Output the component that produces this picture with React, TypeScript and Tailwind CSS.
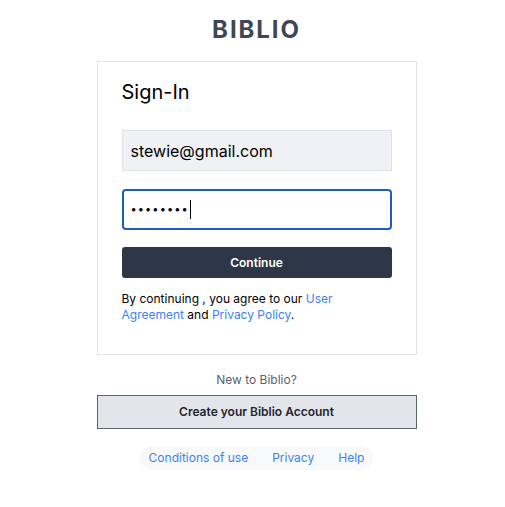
import React from "react";

export default function App() {
  return (
    <div className="min-h-screen bg-white flex flex-col items-center pt-[14px] pl-[8px]" style={{ fontFamily: "Inter, 'Noto Sans', sans-serif" }}>
      <h1 className="text-[24px] leading-[32px] font-bold tracking-[0.08em] text-[#3d4756]">BIBLIO</h1>
      <div className="mt-[15px] w-[320px] border border-[#e2e4ea] px-6 pt-[16px] pb-[31px]">
        <h2 className="text-[20px] leading-[28px] text-black">Sign-In</h2>
        <form className="mt-[24px] flex flex-col" onSubmit={(e) => e.preventDefault()}>
          <input
            defaultValue="stewie@gmail.com"
            className="h-[41px] w-full bg-[#f0f1f5] border border-[#dfe2e8] px-2 text-[16px] text-black outline-none"
          />
          <div className="mt-[18px] h-[41px] w-full border-2 border-[#1a5ec2] rounded-[4px] pl-[7px] flex items-center text-black">
            <span className="text-[11px] tracking-[1.1px]">••••••••</span>
            <span className="ml-[1px] inline-block w-[1px] h-[19px] bg-black" />
          </div>
          <button className="mt-[17px] h-[31px] w-full rounded-[3px] bg-[#2e3747] text-white text-[12px] font-semibold">
            Continue
          </button>
        </form>
        <p className="mt-[13px] text-[12px] leading-[16px] text-black">
          By continuing , you agree to our <a className="text-[#3b82f6]">User Agreement</a> and{" "}
          <a className="text-[#3b82f6]">Privacy Policy</a>.
        </p>
      </div>
      <p className="mt-[17px] text-[12px] leading-[16px] text-[#5b6270]">New to Biblio?</p>
      <button className="mt-[7px] w-[320px] h-[34px] bg-[#e2e5ea] border border-[#5b6270] text-[12px] font-semibold text-[#1f2430]">
        Create your Biblio Account
      </button>
      <div className="mt-[17px] flex items-center gap-6 bg-[#f8f9fb] rounded-full px-[9px] h-[24px] text-[12px] text-[#3b82f6]">
        <a>Conditions of use</a>
        <a>Privacy</a>
        <a>Help</a>
      </div>
    </div>
  );
}
